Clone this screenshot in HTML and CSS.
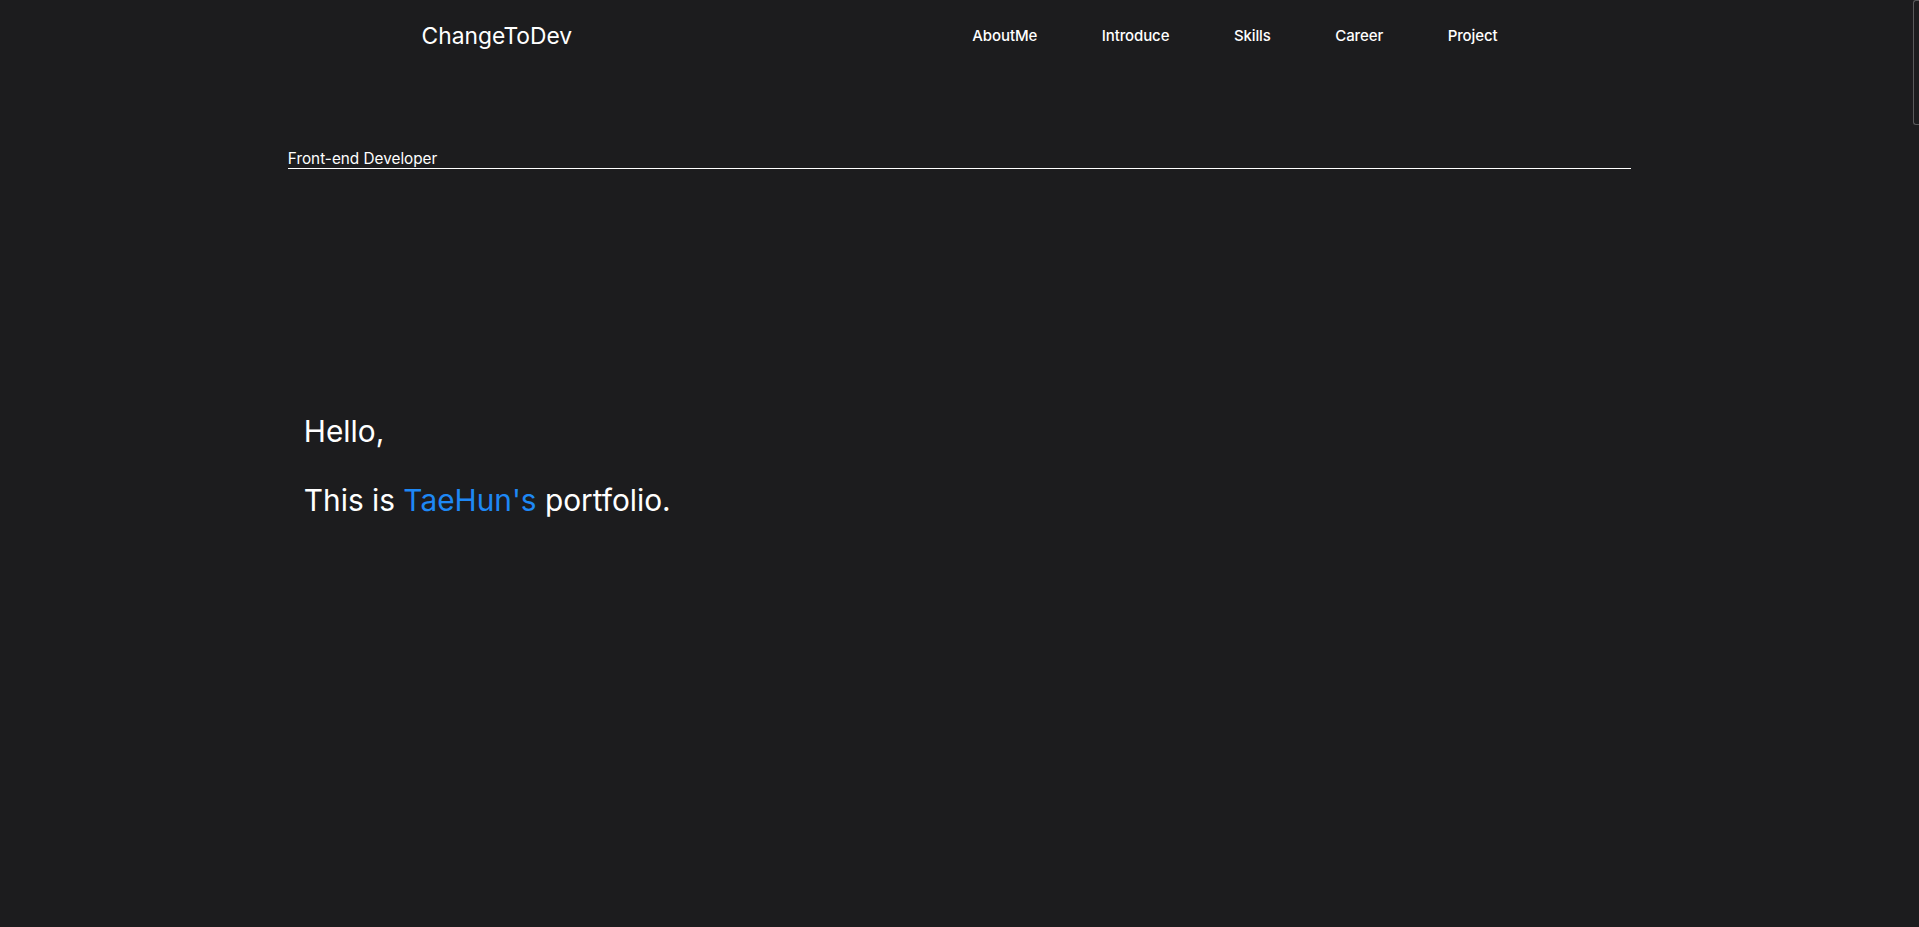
FILE: index.html
```html
<!DOCTYPE html>
<html lang="en">
<head>
<meta charset="utf-8">
<title>ChangeToDev</title>
<link rel="stylesheet" href="styles.css">
</head>
<body>
<header class="header">
  <div class="header-inner">
    <a class="logo" href="#">ChangeToDev</a>
    <nav>
      <ul class="nav-list">
        <li><a href="#">AboutMe</a></li>
        <li><a href="#">Introduce</a></li>
        <li><a href="#">Skills</a></li>
        <li><a href="#">Career</a></li>
        <li><a href="#">Project</a></li>
      </ul>
    </nav>
  </div>
</header>
<main class="main">
  <section class="hero">
    <h2 class="role">Front-end Developer</h2>
    <div class="greeting">
      <p class="greet-line">Hello,</p>
      <p class="greet-line">This is <span class="accent">TaeHun's</span> portfolio.</p>
    </div>
  </section>
</main>
<div class="scroll-thumb"></div>
</body>
</html>
```
FILE: styles.css
```css
* { box-sizing: border-box; }
html, body { margin: 0; padding: 0; }
body {
  background: #1c1c1e;
  color: #ffffff;
  font-family: Inter, "Noto Sans", sans-serif;
  height: 927px;
  overflow: hidden;
}
a { color: inherit; text-decoration: none; }

.header { height: 70px; }
.header-inner {
  width: 1076px;
  margin: 0 auto;
  height: 100%;
  display: flex;
  align-items: center;
  justify-content: space-between;
}
.logo { font-size: 22.8px; line-height: normal; }
.nav-list {
  list-style: none;
  margin: 0;
  padding: 0;
  display: flex;
  gap: 64.5px;
  font-size: 15px;
  font-weight: 500;
  letter-spacing: -0.1px;
}

.hero {
  width: 70%;
  margin: 0 auto;
  padding-top: 78.5px;
}
.role {
  margin: 0;
  font-size: 15.3px;
  font-weight: 400;
  line-height: normal;
  border-bottom: 1px solid #ffffff;
}
.greeting {
  padding: 244px 0 0 16px;
  display: flex;
  flex-direction: column;
  gap: 33px;
}
.greet-line {
  margin: 0;
  font-size: 29.8px;
  line-height: 36px;
}
.accent { color: #1e88f5; }

.scroll-thumb {
  position: fixed;
  top: 0;
  right: 0;
  width: 6px;
  height: 125px;
  border: 1px solid #5a5a5c;
  border-right: none;
  border-radius: 3px 0 0 3px;
}
```
